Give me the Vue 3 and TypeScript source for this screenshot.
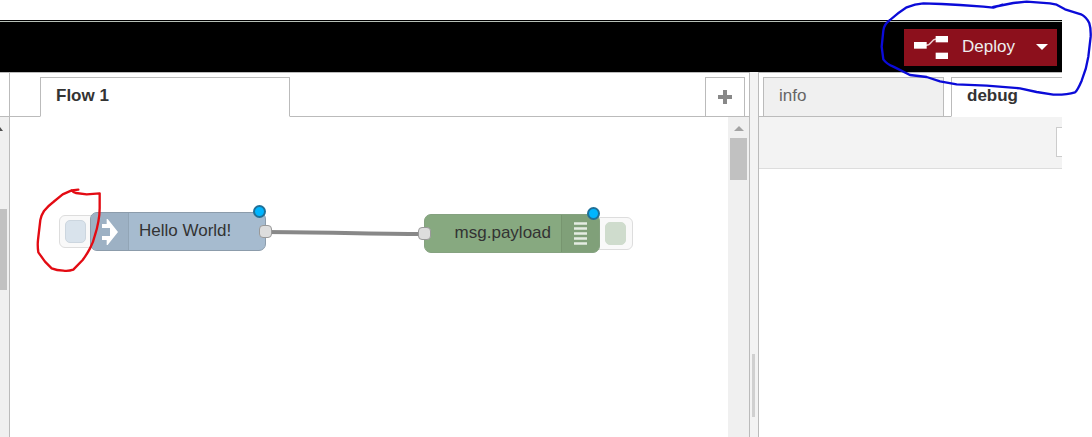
<script setup lang="ts">
import { ref } from 'vue'

interface FlowNode {
  id: string
  label: string
  kind: 'inject' | 'debug'
}

const nodes: FlowNode[] = [
  { id: 'n1', label: 'Hello World!', kind: 'inject' },
  { id: 'n2', label: 'msg.payload', kind: 'debug' },
]
const sidebarTabs = ['info', 'debug']
const activeTab = ref('debug')
</script>

<template>
  <div class="page">
    <header class="header">
      <div class="deploy">
        <button class="deploy-main" type="button">
          <svg class="deploy-icon" viewBox="0 0 102 69" aria-hidden="true">
            <path d="M36 28C54 28 50 10 66 9" fill="none" stroke="#e9c9cc" stroke-width="5" />
            <rect x="0" y="18" width="38" height="20" fill="#fff" />
            <rect x="65" y="0" width="37" height="19" fill="#fff" />
            <rect x="65" y="50" width="37" height="19" fill="#fff" />
          </svg>
          <span>Deploy</span>
        </button>
        <button class="deploy-menu" type="button" aria-label="Deploy options">
          <svg class="caret" viewBox="0 0 12 6" aria-hidden="true"><path d="M0 0H12L6 6Z" fill="#fff" /></svg>
        </button>
      </div>
    </header>

    <main class="main">
      <aside class="palette">
        <div class="palette-head"></div>
        <div class="palette-scroll">
          <svg class="palette-arrow" viewBox="0 0 3 4" aria-hidden="true"><path d="M0 0L3 4H0Z" fill="#505050" /></svg>
          <div class="palette-thumb"></div>
        </div>
      </aside>

      <section class="workspace">
        <nav class="tabs">
          <button class="tab flow-tab active" type="button">Flow 1</button>
          <button class="add-tab" type="button" aria-label="Add flow">
            <svg class="plus" viewBox="0 0 14 14" aria-hidden="true"><path d="M5 0H9V5H14V9H9V14H5V9H0V5H5Z" fill="#888" /></svg>
          </button>
        </nav>
        <div class="chart">
          <div class="canvas">
            <svg class="wire" viewBox="0 0 160 8" aria-hidden="true">
              <path d="M0 3C60 3 100 5 160 5" fill="none" stroke="#888" stroke-width="4" />
            </svg>
            <div v-for="n in nodes" :key="n.id" class="node" :class="n.kind">
              <button class="node-button" type="button" :aria-label="n.label"><span></span></button>
              <div class="node-body">
                <span class="node-icon">
                  <svg v-if="n.kind === 'inject'" class="arrow" viewBox="0 0 48 78" aria-hidden="true">
                    <path d="M14 0H17L48 39L17 78H14V63H0V51H24V27H0V15H14Z" fill="#fff" />
                  </svg>
                  <svg v-else class="bars" viewBox="0 0 13 24" aria-hidden="true">
                    <path d="M0 1.5H13M0 6.5H13M0 11.5H13M0 16.5H13M0 21.5H13" stroke="#e4ebe2" stroke-width="2.6" />
                  </svg>
                </span>
                <span class="node-label">{{ n.label }}</span>
              </div>
              <i class="port"></i>
              <i class="changed"></i>
            </div>
            <svg class="red-mark" viewBox="0 0 240 300" aria-hidden="true">
              <path
                d="M145 29L125 31Q130 38 138 39L170 43L209 40L209 85Q209 105 205 125Q201 148 195 165Q190 187 180 205Q170 224 158 240L130 269Q116 274 100 272Q80 271 65 265L45 245L25 217Q22 198 24 180L31 120Q34 105 42 93Q54 78 70 66L98 43L125 31"
                fill="none" stroke="#e30b13" stroke-width="7" stroke-linejoin="round" stroke-linecap="round"
              />
            </svg>
          </div>
          <div class="scrollbar">
            <svg class="scroll-arrow" viewBox="0 0 10 5" aria-hidden="true"><path d="M0 5L5 0L10 5Z" fill="#a3a3a3" /></svg>
            <div class="scroll-thumb"></div>
          </div>
        </div>
      </section>

      <div class="separator"><div class="grip"></div></div>

      <aside class="sidebar">
        <nav class="tabs side-tabs">
          <button
            v-for="t in sidebarTabs" :key="t" type="button" class="tab side-tab"
            :class="{ active: t === activeTab }" @click="activeTab = t"
          >{{ t }}</button>
        </nav>
        <div class="toolbar"><button class="tool" type="button" aria-label="Filter"></button></div>
      </aside>
    </main>

    <svg class="blue-mark" viewBox="0 0 696 300" aria-hidden="true">
      <path
        d="M428 14L400 23L370 20L300 15L245 12L190 10Q165 12 140 22Q112 40 90 60Q72 72 70 92L65 140L70 178Q80 192 100 200L150 225L200 231L240 244L290 253L380 257L480 265L530 276L580 284Q620 285 645 277Q652 272 665 242Q680 205 685 170L692 110Q693 85 688 70Q680 52 663 43L615 28L590 14L570 10L500 5L460 9L400 21"
        fill="none" stroke="#0b0bd8" stroke-width="7" stroke-linejoin="round" stroke-linecap="round"
      />
    </svg>
  </div>
</template>

<style>
body {
  background: #fff;
}
</style>

<style scoped>
.page {
  position: relative;
  display: flex;
  flex-direction: column;
  box-sizing: border-box;
  height: 100vh;
  padding: 20px 30px 0 0;
  overflow: hidden;
  font-family: "Liberation Sans", Arial, sans-serif;
  font-size: 17px;
  line-height: 20px;
  color: #333;
}
button {
  box-sizing: border-box;
  margin: 0;
  padding: 0;
  border: 0;
  font: inherit;
  color: inherit;
  cursor: pointer;
}
svg {
  display: block;
}
.header {
  display: flex;
  justify-content: flex-end;
  align-items: center;
  flex: none;
  height: 50px;
  padding: 0 5px 0 0;
  background: #000;
  border-top: 1px solid #b8c0b8;
  box-shadow: 0 -1px 0 #000;
  margin-top: 1px;
}
.deploy {
  display: flex;
  height: 37px;
  background: #8c101c;
  color: #eee;
}
.deploy-main {
  display: flex;
  align-items: center;
  gap: 14px;
  width: 123px;
  padding-left: 10px;
  background: transparent;
}
.deploy-icon {
  width: 34px;
  height: 23px;
}
.deploy-menu {
  display: flex;
  align-items: center;
  justify-content: center;
  width: 30px;
  background: transparent;
}
.caret {
  width: 12px;
  height: 6px;
}
.main {
  display: flex;
  flex: 1;
  min-height: 0;
}
.palette {
  display: flex;
  flex-direction: column;
  box-sizing: border-box;
  flex: none;
  width: 10px;
  border-top: 1px solid #bbb;
  border-right: 1px solid #bbb;
}
.palette-head {
  height: 43px;
  border-bottom: 1px solid #bbb;
}
.palette-scroll {
  flex: 1;
  padding-top: 10px;
  background: #f0f0f0;
}
.palette-arrow {
  width: 3px;
  height: 4px;
}
.palette-thumb {
  width: 7px;
  height: 81px;
  margin-top: 78px;
  background: #c1c1c1;
}
.workspace {
  display: flex;
  flex-direction: column;
  flex: 1;
  min-width: 0;
  border-top: 1px solid #bbb;
}
.tabs {
  display: flex;
  align-items: flex-end;
  flex: none;
  box-sizing: border-box;
  height: 44px;
  padding: 0 4px 0 30px;
  box-shadow: inset 0 -1px 0 #bbb;
}
.tab {
  height: 40px;
  padding: 0 15px 2px;
  border: 1px solid #bbb;
  background: #f0f0f0;
  color: #666;
  text-align: left;
}
.tab.active {
  border-bottom-color: #fff;
  background: #fff;
  color: #333;
  font-weight: bold;
}
.flow-tab {
  width: 250px;
}
.add-tab {
  display: flex;
  align-items: center;
  justify-content: center;
  width: 40px;
  height: 40px;
  margin-left: auto;
  border: 1px solid #bbb;
  background: #fff;
}
.plus {
  width: 14px;
  height: 14px;
}
.chart {
  display: flex;
  flex: 1;
  min-height: 0;
}
.canvas {
  position: relative;
  flex: 1;
  overflow: hidden;
}
.scrollbar {
  display: flex;
  flex-direction: column;
  align-items: center;
  flex: none;
  width: 21px;
  padding-top: 9px;
  background: #f0f0f0;
}
.scroll-arrow {
  width: 10px;
  height: 5px;
}
.scroll-thumb {
  width: 17px;
  height: 42px;
  margin-top: 7px;
  background: #c1c1c1;
}
.wire {
  position: absolute;
  left: 255px;
  top: 112px;
  width: 160px;
  height: 8px;
}
.node {
  position: absolute;
  width: 176px;
  height: 39px;
}
.node.inject {
  left: 80px;
  top: 95px;
}
.node.debug {
  left: 414px;
  top: 97px;
}
.node-body {
  position: relative;
  display: flex;
  align-items: center;
  box-sizing: border-box;
  height: 100%;
  border: 1px solid #8c9cab;
  border-radius: 7px;
  background: #a6bbcf;
  overflow: hidden;
}
.debug .node-body {
  flex-direction: row-reverse;
  border-color: #85a280;
  background: #87a980;
}
.node-icon {
  display: flex;
  align-items: center;
  justify-content: center;
  box-sizing: border-box;
  width: 38px;
  height: 100%;
  border-right: 1px solid #92a5b6;
  background: #9db1c4;
}
.debug .node-icon {
  border-right: 0;
  border-left: 1px solid #77956f;
  background: #80a079;
}
.node-label {
  padding: 0 10px 2px;
}
.arrow {
  width: 16px;
  height: 26px;
}
.bars {
  width: 13px;
  height: 24px;
}
.node-button {
  position: absolute;
  left: -31px;
  top: 3px;
  width: 40px;
  height: 33px;
  padding: 4px 5px;
  border: 1px solid #ddd;
  border-radius: 6px;
  background: #f9f9f9;
}
.node-button span {
  display: block;
  box-sizing: border-box;
  width: 21px;
  height: 23px;
  border: 1px solid #ccd6df;
  border-radius: 5px;
  background: #d9e3ec;
}
.debug .node-button {
  left: 169px;
}
.debug .node-button span {
  margin-left: 6px;
  border-color: #cfdccd;
  background: #cfdccd;
}
.port {
  position: absolute;
  right: -6px;
  top: 13px;
  box-sizing: border-box;
  width: 13px;
  height: 13px;
  border: 1px solid #999;
  border-radius: 4px;
  background: #ddd;
}
.debug .port {
  right: auto;
  left: -6px;
}
.changed {
  position: absolute;
  right: 0;
  top: -7px;
  box-sizing: border-box;
  width: 13px;
  height: 13px;
  border: 2px solid #1f7097;
  border-radius: 50%;
  background: #00b5ff;
}
.red-mark {
  position: absolute;
  left: 20px;
  top: 63px;
  width: 80px;
  height: 100px;
  pointer-events: none;
}
.separator {
  flex: none;
  box-sizing: border-box;
  width: 10px;
  padding: 282px 3px 0 2px;
  border-left: 1px solid #bbb;
  border-right: 1px solid #bbb;
  background: #f3f3f3;
}
.grip {
  height: 63px;
  background: #d0d0d0;
}
.sidebar {
  display: flex;
  flex-direction: column;
  flex: 0 1 303px;
  min-width: 0;
  border-top: 1px solid #bbb;
  overflow: hidden;
}
.side-tabs {
  gap: 7px;
  padding: 0 0 0 4px;
}
.side-tab {
  flex: none;
  width: 181px;
}
.toolbar {
  display: flex;
  justify-content: flex-end;
  flex: none;
  box-sizing: border-box;
  height: 52px;
  padding-top: 10px;
  border-bottom: 1px solid #ddd;
  background: #f3f3f3;
}
.tool {
  width: 6px;
  height: 30px;
  border: 1px solid #ccc;
  border-right: 0;
  background: #fff;
}
.blue-mark {
  position: absolute;
  right: 0;
  top: 0;
  width: 232px;
  height: 100px;
  pointer-events: none;
}
</style>
